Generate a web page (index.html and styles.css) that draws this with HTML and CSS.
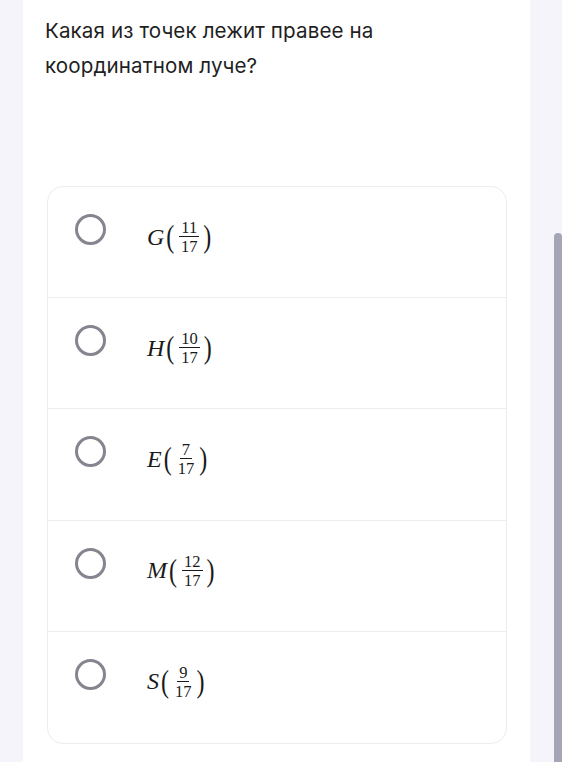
FILE: index.html
```html
<!DOCTYPE html>
<html lang="ru">
<head>
  <meta charset="UTF-8" />
  <meta name="viewport" content="width=device-width, initial-scale=1.0"/>
  <title>Вопрос</title>
  <link rel="stylesheet" href="styles.css">
</head>
<body>
  <div class="gutter"></div>

  <main class="panel">
    <h1 class="question">Какая из точек лежит правее на координатном луче?</h1>

    <div class="options">
      <label class="option">
        <span class="radio"></span>
        <span class="math"><i>G</i><span class="paren">(</span><span class="frac"><span class="num">11</span><span class="den">17</span></span><span class="paren">)</span></span>
      </label>
      <label class="option">
        <span class="radio"></span>
        <span class="math"><i>H</i><span class="paren">(</span><span class="frac"><span class="num">10</span><span class="den">17</span></span><span class="paren">)</span></span>
      </label>
      <label class="option">
        <span class="radio"></span>
        <span class="math"><i>E</i><span class="paren">(</span><span class="frac"><span class="num">7</span><span class="den">17</span></span><span class="paren">)</span></span>
      </label>
      <label class="option">
        <span class="radio"></span>
        <span class="math"><i>M</i><span class="paren">(</span><span class="frac"><span class="num">12</span><span class="den">17</span></span><span class="paren">)</span></span>
      </label>
      <label class="option">
        <span class="radio"></span>
        <span class="math"><i>S</i><span class="paren">(</span><span class="frac"><span class="num">9</span><span class="den">17</span></span><span class="paren">)</span></span>
      </label>
    </div>
  </main>

  <div class="track">
    <div class="thumb"></div>
  </div>
</body>
</html>
```

FILE: styles.css
```css
body {
  margin: 0;
  padding: 0;
  background: #f4f4fa;
  font-family: 'Inter', 'Noto Sans', sans-serif;
  color: #1f1f24;
  display: flex;
  height: 762px;
  overflow: hidden;
}
.gutter {
  width: 23px;
  flex-shrink: 0;
}
.panel {
  width: 507px;
  flex-shrink: 0;
  background: #fff;
  padding: 13px 23px 0 24px;
  box-sizing: border-box;
}
.question {
  margin: 0 0 0 -2px;
  font-size: 20.6px;
  font-weight: 400;
  line-height: 35px;
  letter-spacing: 0.1px;
  max-width: 380px;
}
.options {
  margin-top: 103px;
  border: 1px solid #ececf1;
  border-radius: 16px;
  height: 558px;
  box-sizing: border-box;
  display: grid;
  grid-template-rows: repeat(5, 1fr);
}
.option {
  display: flex;
  align-items: flex-start;
  padding: 27px 0 0 27px;
  border-bottom: 1px solid #ececf1;
  cursor: pointer;
}
.option:last-child {
  border-bottom: none;
}
.radio {
  width: 31px;
  height: 31px;
  border: 3px solid #85848f;
  border-radius: 50%;
  box-sizing: border-box;
  flex-shrink: 0;
}
.math {
  margin-left: 41px;
  margin-top: 6px;
  display: flex;
  align-items: center;
  font-family: 'Liberation Serif', 'DejaVu Serif', serif;
  font-size: 24px;
  color: #1a1a1a;
}
.math i {
  margin-right: 2px;
}
.paren {
  font-size: 24px;
  line-height: 1;
  transform: scaleY(1.3);
}
.frac {
  display: flex;
  flex-direction: column;
  align-items: center;
  margin: 0 4px 0 5px;
  font-size: 16.5px;
  line-height: 15px;
}
.num {
  padding: 0 2px 1px;
  border-bottom: 1px solid #1a1a1a;
}
.den {
  padding: 2px 1px 0;
}
.track {
  flex: 1;
  display: flex;
  justify-content: flex-end;
}
.thumb {
  margin-top: 233px;
  width: 8px;
  height: 540px;
  background: #a4a6b6;
  border-radius: 4px 4px 0 0;
}
```
